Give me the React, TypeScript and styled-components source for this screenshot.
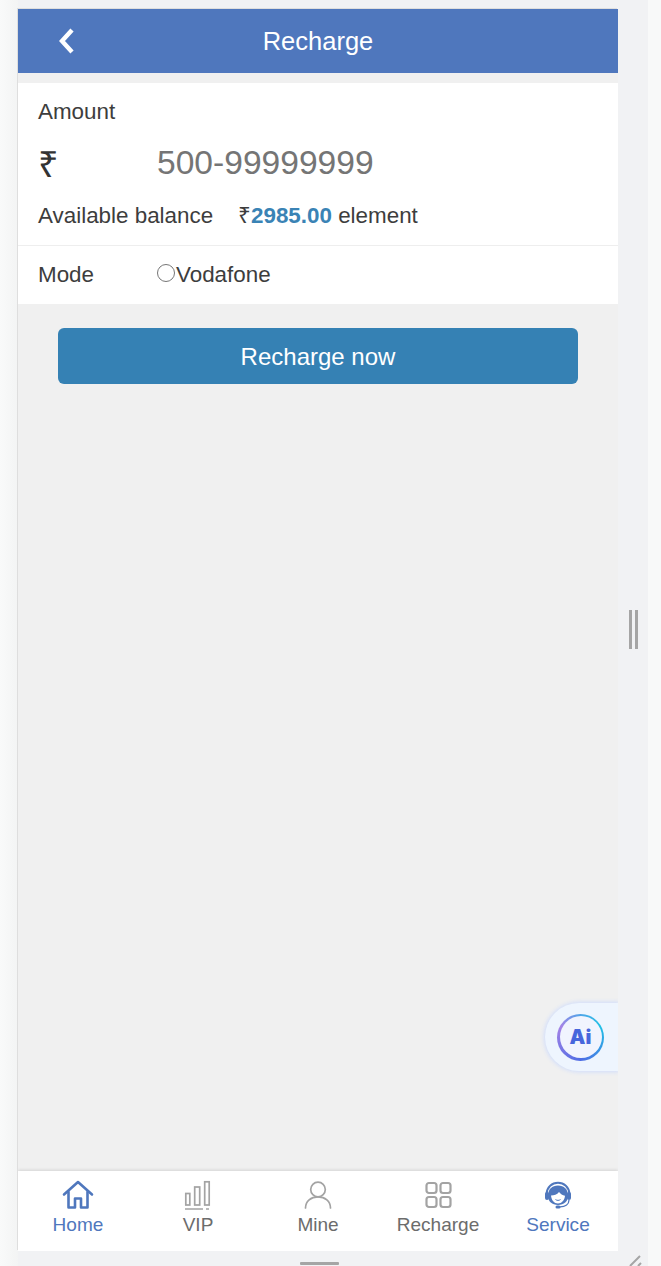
import React from "react";
import styled, { createGlobalStyle } from "styled-components";

const GlobalStyle = createGlobalStyle`
  html, body {
    margin: 0;
    padding: 0;
    background: #f8f9f9;
  }
  * {
    box-sizing: border-box;
  }
`;

const Shell = styled.div`
  display: flex;
  width: 661px;
  height: 1266px;
  overflow: hidden;
  font-family: "Liberation Sans", Arial, sans-serif;
  color: #3d3d3d;
`;

const LeftGutter = styled.div`
  width: 18px;
  flex-shrink: 0;
  background: linear-gradient(to right, #f9fafa, #f3f4f4);
`;

const Column = styled.div`
  position: relative;
  display: flex;
  flex-direction: column;
  width: 600px;
  flex-shrink: 0;
  padding-top: 9px;
  background: #f1f2f4;
`;

const Screen = styled.div`
  position: relative;
  flex: 1;
  display: flex;
  flex-direction: column;
  min-height: 0;
  background: #f0f0f0;
  box-shadow: -1px -1px 0 0 #dedede;
`;

const Header = styled.header`
  display: flex;
  align-items: center;
  justify-content: center;
  position: relative;
  height: 64px;
  background: #4f77bd;
  color: #fff;
  font-size: 25.5px;
`;

const BackButton = styled.span`
  position: absolute;
  left: 38px;
  top: 18px;
  display: flex;
`;

const Card = styled.section`
  margin-top: 10px;
  background: #fff;
`;

const AmountBlock = styled.div`
  display: flex;
  flex-direction: column;
  padding: 15px 20px 0;
  height: 163px;
  border-bottom: 1px solid #eeeeee;
`;

const Label = styled.div`
  font-size: 22.4px;
  line-height: 28px;
`;

const AmountRow = styled.div`
  display: flex;
  align-items: center;
  height: 44px;
  margin-top: 15px;
`;

const Currency = styled.span`
  width: 119px;
  font-size: 36px;
  color: #333;
`;

const AmountInput = styled.input`
  flex: 1;
  min-width: 0;
  border: 0;
  outline: 0;
  padding: 0;
  font-family: inherit;
  font-size: 33.6px;

  &::placeholder {
    color: #757575;
    opacity: 1;
  }
`;

const BalanceRow = styled.div`
  display: flex;
  margin-top: 17px;
  font-size: 22.4px;
  line-height: 28px;
`;

const BalanceLabel = styled.span`
  width: 200px;
`;

const BalanceValue = styled.strong`
  color: #3a83b5;
`;

const ModeRow = styled.div`
  display: flex;
  align-items: center;
  height: 58px;
  padding-left: 20px;
  font-size: 22.4px;
`;

const ModeLabel = styled.span`
  width: 119px;
`;

const Radio = styled.input`
  appearance: none;
  width: 18px;
  height: 18px;
  margin: 0 1px 5px 0;
  border: 1.5px solid #767676;
  border-radius: 50%;
  background: #fff;
`;

const Content = styled.main`
  flex: 1;
  display: flex;
  flex-direction: column;
  align-items: center;
  padding-top: 24px;
`;

const SubmitButton = styled.button`
  width: 520px;
  height: 56px;
  padding: 2px 0 0;
  border: 0;
  border-radius: 6px;
  background: #3581b4;
  color: #fff;
  font-family: inherit;
  font-size: 24px;
`;

const AiPill = styled.div`
  position: absolute;
  right: 0;
  top: 994px;
  display: flex;
  align-items: center;
  width: 73px;
  height: 68px;
  padding-left: 12px;
  border-radius: 34px 0 0 34px;
  background: #eef5fe;
  box-shadow: 0 0 4px 1px #cfdcfb;
  clip-path: inset(-8px 0 -8px -8px);
`;

const AiBadge = styled.div`
  width: 47px;
  height: 47px;
  padding: 2.5px;
  border-radius: 50%;
  background: conic-gradient(#4fa5e8 0deg, #1fc0e6 60deg, #4f6ce4 180deg, #a583e6 300deg, #4fa5e8 360deg);
`;

const AiInner = styled.div`
  width: 100%;
  height: 100%;
  display: flex;
  align-items: center;
  justify-content: center;
  border-radius: 50%;
  background: #f1f4fe;
`;

const AiText = styled.span`
  font-family: Inter, "Liberation Sans", sans-serif;
  font-size: 20px;
  font-weight: 900;
  color: #4766dc;
`;

const BottomNav = styled.nav`
  display: flex;
  height: 80px;
  background: #fff;
  box-shadow: 0 -1px 3px rgba(0, 0, 0, 0.12);
  clip-path: inset(-4px 0 0 0);
`;

const NavItem = styled.a<{ $active?: boolean }>`
  flex: 1;
  display: flex;
  flex-direction: column;
  align-items: center;
  padding-top: 8px;
  font-size: 19.04px;
  color: ${(p) => (p.$active ? "#4f77bd" : "#6c6c6c")};
`;

const NavIcon = styled.svg`
  display: block;
  width: 32px;
  height: 32px;
`;

const NavLabel = styled.span`
  margin-top: 2px;
  line-height: 24px;
`;

const BottomStrip = styled.div`
  flex-shrink: 0;
  display: flex;
  justify-content: center;
  align-items: flex-end;
  height: 15px;
  padding: 0 0 1px 3px;
  background: #f1f2f4;
`;

const BottomHandle = styled.span`
  width: 39px;
  height: 3px;
  border-radius: 1px;
  background: #a5a5a5;
`;

const RightRail = styled.aside`
  width: 30px;
  flex-shrink: 0;
  display: flex;
  flex-direction: column;
  align-items: center;
  background: #f1f2f4;
  padding-top: 610px;
`;

const GripBars = styled.div`
  display: flex;
  gap: 3px;
  padding-left: 1px;
`;

const GripBar = styled.span`
  width: 3px;
  height: 39px;
  background: #a5a5a5;
`;

const CornerMark = styled.svg`
  margin-top: auto;
  margin-right: 5px;
  align-self: flex-end;
  display: block;
`;

const RightEdge = styled.div`
  flex: 1;
  background: #f8f9f9;
`;

const HomeIcon = () => (
  <NavIcon viewBox="0 0 32 32" fill="none" stroke="currentColor" strokeWidth="2.6" strokeLinejoin="round" strokeLinecap="round">
    <path d="M2 15.500 16 3l14 12.500" />
    <path d="M6.500 13v15.500h6.500V19.500h6V28.500h6.500V13" />
  </NavIcon>
);

const VipIcon = () => (
  <NavIcon viewBox="0 0 32 32" fill="none" stroke="#a3a3a3" strokeWidth="1.7">
    <rect x="3.800" y="14.500" width="4" height="11.500" />
    <rect x="12.700" y="8" width="5" height="18" />
    <rect x="22.700" y="2.800" width="4.500" height="23.200" />
    <path d="M3 30h18M24 30h3" />
  </NavIcon>
);

const MineIcon = () => (
  <NavIcon viewBox="0 0 32 32" fill="none" stroke="#a3a3a3" strokeWidth="1.7">
    <circle cx="16" cy="10.500" r="7.300" />
    <path d="M3.500 29c0-7 5.500-11.200 12.500-11.200S28.500 22 28.500 29" strokeLinecap="round" />
  </NavIcon>
);

const GridIcon = () => (
  <NavIcon viewBox="0 0 32 32" fill="none" stroke="#a3a3a3" strokeWidth="2.2">
    <rect x="4.500" y="4" width="10" height="10" rx="2.500" />
    <rect x="18.500" y="4" width="10" height="10" rx="2.500" />
    <rect x="4.500" y="18" width="10" height="10" rx="2.500" />
    <rect x="18.500" y="18" width="10" height="10" rx="2.500" />
  </NavIcon>
);

const ServiceIcon = () => (
  <NavIcon viewBox="0 0 32 32">
    <path d="M6 17C6 10 10 6.500 16 6.500S26 10 26 17c0 5.500-4 9-10 9S6 22.500 6 17Z" fill="#4f77bd" />
    <path d="M9 16.500c3 0 6-.8 8-3.500 1.500 2 3.500 3.300 6 3.800-.5 4.700-3.200 7.700-7 7.700s-6.500-3.200-7-8Z" fill="#fff" />
    <path d="M13.500 20.500c1.500 1.200 3.500 1.200 5 0" fill="none" stroke="#4f77bd" strokeWidth="1" />
    <path d="M4.500 15C5 8 10 3.800 16 3.800S27 8 27.500 15" fill="none" stroke="#4f77bd" strokeWidth="2" />
    <rect x="3" y="13" width="4" height="8" rx="2" fill="#4f77bd" />
    <rect x="25" y="13" width="4" height="8" rx="2" fill="#4f77bd" />
    <path d="M27 21c0 4-3.500 6.800-9 6.800" fill="none" stroke="#4f77bd" strokeWidth="1.300" />
    <rect x="13.500" y="26.500" width="5" height="3" rx="1.500" fill="#4f77bd" />
  </NavIcon>
);

const navItems = [
  { label: "Home", icon: <HomeIcon />, active: true },
  { label: "VIP", icon: <VipIcon />, active: false },
  { label: "Mine", icon: <MineIcon />, active: false },
  { label: "Recharge", icon: <GridIcon />, active: false },
  { label: "Service", icon: <ServiceIcon />, active: true },
];

export default function App() {
  return (
    <Shell>
      <GlobalStyle />
      <LeftGutter />
      <Column>
        <Screen>
          <Header>
            <BackButton>
              <svg width="20" height="28" viewBox="0 0 20 28" fill="none" stroke="#fff" strokeWidth="4.4">
                <path d="M16 3 6 14l10 11" />
              </svg>
            </BackButton>
            Recharge
          </Header>
          <Card>
            <AmountBlock>
              <Label>Amount</Label>
              <AmountRow>
                <Currency>₹</Currency>
                <AmountInput placeholder="500-99999999" />
              </AmountRow>
              <BalanceRow>
                <BalanceLabel>Available balance</BalanceLabel>
                <span>
                  ₹<BalanceValue>2985.00</BalanceValue> element
                </span>
              </BalanceRow>
            </AmountBlock>
            <ModeRow>
              <ModeLabel>Mode</ModeLabel>
              <Radio type="radio" name="mode" />
              Vodafone
            </ModeRow>
          </Card>
          <Content>
            <SubmitButton>Recharge now</SubmitButton>
          </Content>
          <AiPill>
            <AiBadge>
              <AiInner>
                <AiText>Ai</AiText>
              </AiInner>
            </AiBadge>
          </AiPill>
          <BottomNav>
            {navItems.map((item) => (
              <NavItem key={item.label} $active={item.active}>
                {item.icon}
                <NavLabel>{item.label}</NavLabel>
              </NavItem>
            ))}
          </BottomNav>
        </Screen>
        <BottomStrip>
          <BottomHandle />
        </BottomStrip>
      </Column>
      <RightRail>
        <GripBars>
          <GripBar />
          <GripBar />
        </GripBars>
        <CornerMark width="14" height="11" viewBox="0 0 14 11" fill="none" stroke="#a5a5a5" strokeWidth="2">
          <path d="M1 11 11 1M9 11l3-3" />
        </CornerMark>
      </RightRail>
      <RightEdge />
    </Shell>
  );
}
